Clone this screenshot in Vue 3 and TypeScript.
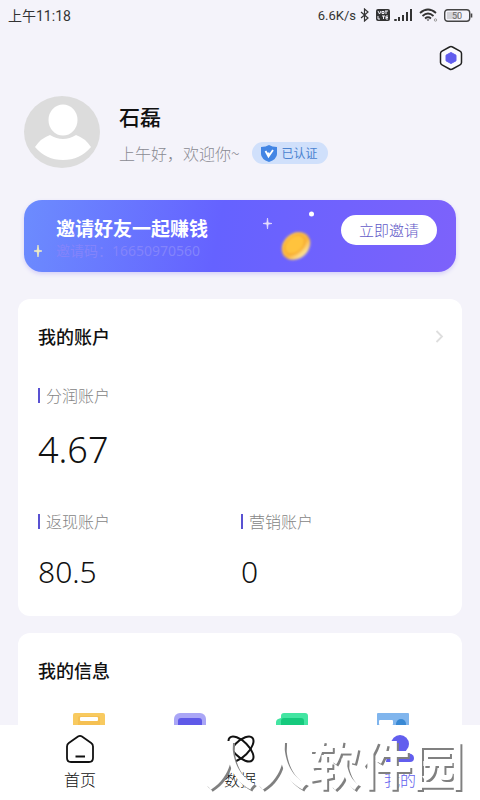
<script setup lang="ts">
interface Account {
  label: string
  value: string
}

const mainAccount: Account = { label: '分润账户', value: '4.67' }
const accounts: Account[] = [
  { label: '返现账户', value: '80.5' },
  { label: '营销账户', value: '0' },
]
</script>

<template>
  <div class="screen">
    <header class="status">
      <span class="time">上午11:18</span>
      <div class="signals">
        <span class="speed">6.6K/s</span>
        <svg width="10" height="14" viewBox="0 0 10 14" fill="none" stroke="#333" stroke-width="1.2">
          <path d="M1 4l7 6-3.500 3V1L8 4l-7 6" />
        </svg>
        <svg class="volte" width="14" height="12" viewBox="0 0 14 12">
          <rect width="14" height="12" rx="2" fill="#333" />
          <path d="M2 2l1.500 3L5 2M6 2.500h2v2H6zM10 2v3M9 2h3M2 7v3h2M6 7h3M7.500 7v3M12 7h-2v3h2M10 8.500h2" fill="none" stroke="#f4f3fb" />
        </svg>
        <svg class="bars" width="18" height="12" viewBox="0 0 18 12" fill="#333">
          <rect y="10" width="3" height="2" rx="1" />
          <rect x="4" y="8" width="2" height="4" />
          <rect x="8" y="6" width="2" height="6" />
          <rect x="12" y="3" width="2" height="9" />
          <rect x="16" width="2" height="12" />
        </svg>
        <svg class="wifi" width="19" height="14" viewBox="0 0 19 14" fill="none" stroke="#333" stroke-width="1.800">
          <path d="M1 5q8-7 16 0M3.500 8q5.500-5 11 0M6 10.500q3-2.500 6 0" />
          <path d="M7.500 11.500h3L9 13z" fill="#333" stroke="none" />
          <circle cx="16.500" cy="12" r="1.200" stroke="#999" stroke-width="1" />
        </svg>
        <svg class="battery" width="29" height="13" viewBox="0 0 29 13">
          <rect x="3" y="3" width="12" height="7" fill="#d2d2d7" />
          <rect x=".7" y=".7" width="25" height="11.600" rx="3" fill="none" stroke="#444" stroke-width="1.400" />
          <path d="M27.500 4.500v4" stroke="#444" stroke-width="1.600" />
          <text x="13" y="10" text-anchor="middle" font-size="9" fill="#666">50</text>
        </svg>
      </div>
    </header>

    <main class="content">
      <div class="toolbar">
        <button class="plain" type="button" aria-label="设置">
          <svg width="24" height="26" viewBox="0 0 24 26">
            <path d="M10.500 2 3 6.200Q1.500 7 1.500 8.500v9q0 1.500 1.500 2.300l7.500 4.200q1.500.800 3 0l7.500-4.200q1.500-.800 1.500-2.300v-9Q22.500 7 21 6.200L13.500 2q-1.500-.800-3 0z" fill="#fcfcff" stroke="#222" stroke-width="1.500" />
            <path d="M12 7.500l5 2.700v5.600l-5 2.700-5-2.700v-5.600z" fill="#625eee" stroke="#625eee" stroke-linejoin="round" />
          </svg>
        </button>
      </div>

      <section class="profile">
        <svg class="avatar" width="76" height="72" viewBox="0 0 76 72">
          <ellipse cx="38" cy="36" rx="38" ry="36" fill="#dcdcdc" />
          <ellipse cx="39" cy="24" rx="14.500" ry="15.500" fill="#fff" />
          <path d="M11 51Q17 42 26 39q13 8 26 0 9 3 15 12-11 13-28 13T11 51z" fill="#fff" />
        </svg>
        <div>
          <h1>石磊</h1>
          <div class="greeting">
            <span>上午好，欢迎你~</span>
            <span class="badge">
              <svg width="16" height="17" viewBox="0 0 16 17">
                <path d="M8 0q3 2 8 2v7q0 5-8 8-8-3-8-8V2q5 0 8-2z" fill="#4285e4" />
                <path d="M4.500 6l3 5.500L12 5M7.500 11V7.500" fill="none" stroke="#fff" stroke-width="1.800" />
              </svg>
              已认证
            </span>
          </div>
        </div>
      </section>

      <section class="banner">
        <svg class="spark" width="8" height="12" viewBox="0 0 8 12"><path d="M4 0l.800 5.200L8 6l-3.200.800L4 12l-.800-5.200L0 6l3.200-.800z" fill="#f6f2c0" stroke="#f6f2c0" stroke-width=".7" /></svg>
        <div class="invite">
          <h2>邀请好友一起赚钱</h2>
          <p>邀请码：16650970560</p>
        </div>
        <svg class="coin" width="54" height="54" viewBox="0 0 54 54">
          <defs>
            <linearGradient id="gold" x1="0" y1="0" x2="0" y2="1">
              <stop offset="0" stop-color="#ffc95a" />
              <stop offset=".6" stop-color="#fbb53e" />
              <stop offset="1" stop-color="#ffe9a0" />
            </linearGradient>
            <filter id="soft" x="-20%" y="-20%" width="140%" height="140%"><feGaussianBlur stdDeviation=".8" /></filter>
          </defs>
          <path d="M4.500 7l.700 4.800 3.800.700-3.800.700-.700 4.800-.700-4.800L0 12.500l3.800-.700z" fill="#e5ddfd" stroke="#e5ddfd" stroke-width=".7" />
          <circle cx="48.500" cy="3" r="2.500" fill="#fff" />
          <g transform="rotate(-42 33 35)">
            <ellipse cx="33" cy="35" rx="15.500" ry="12.500" fill="url(#gold)" filter="url(#soft)" />
            <ellipse cx="33" cy="33" rx="11.500" ry="8" fill="#ffc33c" stroke="#f3a62f" stroke-width="1.200" filter="url(#soft)" />
            <path d="M29 34h8" stroke="#f0a02c" stroke-width="2.500" filter="url(#soft)" />
          </g>
        </svg>
        <button class="invite-button" type="button">立即邀请</button>
      </section>

      <section class="card">
        <a class="card-head" href="#account">
          <h2>我的账户</h2>
          <svg width="9" height="13" viewBox="0 0 9 13" fill="none" stroke="#dedede" stroke-width="1.800"><path d="M1.500 1l5.500 5.500L1.500 12" /></svg>
        </a>
        <dl class="account primary">
          <dt>{{ mainAccount.label }}</dt>
          <dd>{{ mainAccount.value }}</dd>
        </dl>
        <div class="account-grid">
          <dl v-for="account in accounts" :key="account.label" class="account">
            <dt>{{ account.label }}</dt>
            <dd>{{ account.value }}</dd>
          </dl>
        </div>
      </section>

      <section class="card info">
        <div class="card-head"><h2>我的信息</h2></div>
        <div class="shortcuts">
          <svg viewBox="0 0 32 30" width="32" height="30">
            <rect width="32" height="30" rx="2" fill="#f8ca60" />
            <path d="M5 12V5q0-2 2-2h18q2 0 2 2v7" fill="#f5c052" />
            <rect x="7" y="4" width="18" height="4" rx="1" fill="#fff" />
          </svg>
          <svg viewBox="0 0 32 30" width="32" height="30">
            <rect width="32" height="30" rx="6" fill="#aaa6f6" />
            <rect x="4" y="5" width="24" height="25" rx="3" fill="#5f59e8" />
          </svg>
          <svg viewBox="0 0 32 30" width="32" height="30">
            <path d="M0 30V9q0-3 5-4V3q0-3 3-3h21q3 0 3 3v27z" fill="#43e5a2" />
            <path d="M5 30V8q0-3 3-3h17q3 0 3 3v22z" fill="#15ca7d" />
          </svg>
          <svg viewBox="0 0 32 30" width="32" height="30">
            <rect width="32" height="30" rx="1" fill="#80b5ed" />
            <rect x="2" y="7" width="14" height="5" rx="1" fill="#fff" />
            <circle cx="24" cy="11" r="5" fill="#3989d4" />
          </svg>
        </div>
      </section>
    </main>

    <nav class="tabs">
      <a href="#home">
        <svg width="30" height="30" viewBox="0 0 30 30" fill="none" stroke="#111" stroke-width="1.800">
          <path d="M13 2.600 3.800 9Q2 10.200 2 12.500V24q0 4 4 4h18q4 0 4-4V12.500q0-2.300-1.800-3.500L17 2.600q-2-1.300-4 0zM10.500 22.500h9.500" />
        </svg>
        首页
      </a>
      <a href="#data">
        <svg width="30" height="30" viewBox="0 0 30 30" fill="none" stroke="#111" stroke-width="2">
          <ellipse cx="16" cy="15" rx="16" ry="7.500" transform="rotate(45 16 15)" />
          <ellipse cx="16" cy="15" rx="16" ry="7.500" transform="rotate(-45 16 15)" />
        </svg>
        数据
      </a>
      <a href="#mine" class="active">
        <svg width="30" height="30" viewBox="0 0 30 30" fill="#625eee">
          <circle cx="15" cy="10" r="9" />
          <path d="M1 28q0-9 9-9h10q9 0 9 5 0 4-4 4z" />
        </svg>
        我的
      </a>
      <span class="watermark">人人软件园</span>
    </nav>
  </div>
</template>

<style>
body {
  background: #f4f3fa;
}
</style>

<style scoped>
* {
  box-sizing: border-box;
}
h1, h2, p, dl, dt, dd {
  margin: 0;
}
.screen {
  display: flex;
  flex-direction: column;
  height: 100vh;
  overflow: hidden;
  background: #f4f3fa;
  color: #111;
  font-family: "Noto Sans CJK SC", sans-serif;
}
.status {
  flex: none;
  display: flex;
  justify-content: space-between;
  align-items: center;
  height: 30px;
  padding: 0 7px 0 8px;
  color: #333;
  font-family: Roboto, "Noto Sans CJK SC", sans-serif;
  font-size: 14px;
}
.time {
  font-family: Roboto, "Noto Sans CJK SC", sans-serif;
}
.signals {
  display: flex;
  align-items: center;
  gap: 4px;
}
.speed {
  font-size: 13px;
}
.volte {
  margin-left: 2px;
}
.wifi {
  margin-left: 3px;
}
.battery {
  margin-left: 2px;
}
.content {
  flex: 1;
  min-height: 0;
  overflow: hidden;
}
.toolbar {
  display: flex;
  justify-content: flex-end;
  padding: 15px 17px 0;
}
.plain {
  display: flex;
  padding: 0;
  border: 0;
  background: none;
}
.profile {
  display: flex;
  gap: 19px;
  padding: 25px 24px 0;
}
.profile h1 {
  margin-top: 4px;
  font-size: 21px;
  font-weight: 500;
  line-height: 32px;
}
.greeting {
  display: flex;
  align-items: center;
  gap: 12px;
  margin-top: 10px;
  color: #8a8a92;
  font-size: 16px;
  font-weight: 300;
  line-height: 22px;
}
.badge {
  display: flex;
  align-items: center;
  gap: 5px;
  padding: 0 10px 0 9px;
  border-radius: 11px;
  background: #d0e0fb;
  color: #4b83d0;
  font-size: 12px;
  font-weight: 400;
}
.banner {
  position: relative;
  display: flex;
  height: 72px;
  margin: 32px 24px 0;
  padding: 0 19px 0 32px;
  border-radius: 18px;
  background: linear-gradient(100deg, #6c8cfe, #6562ff 45%, #7d62fb);
  box-shadow: 0 2px 4px #d5d0f8;
}
.spark {
  position: absolute;
  left: 10px;
  top: 45px;
}
.invite {
  flex: 1;
  padding-top: 15px;
}
.invite h2 {
  color: #fff;
  font-size: 19px;
  font-weight: 700;
  line-height: 25px;
  white-space: nowrap;
}
.invite p {
  color: #8384fb;
  font-family: "Noto Sans", "Noto Sans CJK SC", sans-serif;
  font-size: 14px;
  line-height: 22px;
}
.coin {
  margin: 11px 24px 0 0;
}
.invite-button {
  width: 96px;
  height: 30px;
  margin-top: 15px;
  padding: 0 0 2px;
  border: 0;
  border-radius: 15px;
  background: #fff;
  color: #625ac8;
  font-family: inherit;
  font-size: 15px;
  font-weight: 300;
}
.card {
  margin: 27px 18px 0;
  padding: 24px 18px 26px 20px;
  border-radius: 12px;
  background: #fff;
}
.card.info {
  margin-top: 17px;
}
.card-head {
  display: flex;
  justify-content: space-between;
  align-items: center;
  color: #111;
  text-decoration: none;
}
.card-head h2 {
  font-size: 18px;
  font-weight: 500;
  line-height: 26px;
}
.account dt {
  display: flex;
  align-items: center;
  gap: 6px;
  color: #858585;
  font-size: 16px;
  font-weight: 300;
  line-height: 22px;
}
.account dt::before {
  width: 2px;
  height: 15px;
  background: #5951d2;
  content: "";
}
.account dd {
  margin-top: 22px;
  font-family: "Noto Sans", "Noto Sans CJK SC", sans-serif;
  font-size: 30px;
  font-weight: 300;
  line-height: 36px;
}
.account.primary {
  margin-top: 35px;
}
.account.primary dd {
  margin-top: 20px;
  font-size: 36px;
  line-height: 48px;
}
.account-grid {
  display: grid;
  grid-template-columns: 1fr 1fr;
  margin-top: 36px;
}
.shortcuts {
  display: grid;
  grid-template-columns: repeat(4, 1fr);
  justify-items: center;
  margin-top: 30px;
}
.tabs {
  position: relative;
  flex: none;
  display: grid;
  grid-template-columns: repeat(3, 1fr);
  height: 75px;
  background: #fff;
}
.tabs a {
  display: flex;
  flex-direction: column;
  align-items: center;
  padding-top: 9px;
  color: #111;
  font-size: 16px;
  font-weight: 300;
  line-height: 30px;
  text-decoration: none;
}
.tabs .active {
  color: #625eee;
}
.watermark {
  position: absolute;
  right: 16px;
  bottom: 5px;
  color: #fff;
  font-size: 52px;
  font-weight: 700;
  line-height: 64px;
  text-shadow: 2px 2px 0 #808080;
  pointer-events: none;
}
</style>
